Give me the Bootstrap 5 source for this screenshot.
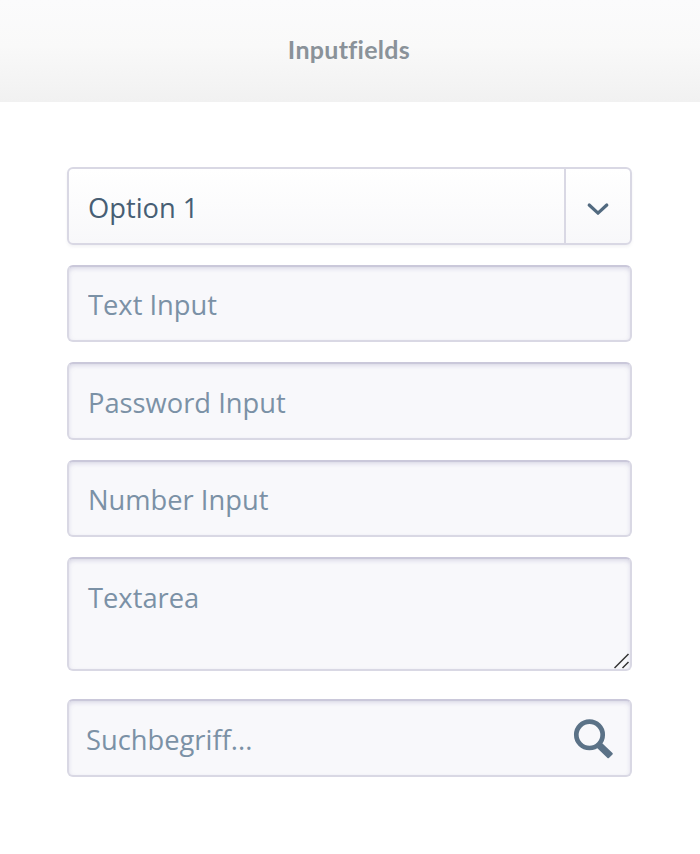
<!DOCTYPE html>
<html lang="en">
<head>
<meta charset="utf-8">
<meta name="viewport" content="width=device-width, initial-scale=1">
<title>Inputfields</title>
<link href="https://cdn.jsdelivr.net/npm/bootstrap@5.3.0/dist/css/bootstrap.min.css" rel="stylesheet">
<style>
body{font-family:"Open Sans",sans-serif;min-height:854px}
.page-head{height:101.5px;padding-bottom:3px;background:linear-gradient(#fbfbfc,#f9f9f9 45%,#f1f1f1)}
.page-title{font:700 25px/30px Lato,sans-serif;color:#8a9299;letter-spacing:.3px;padding-right:2px;font-variant-ligatures:none}
.fields{padding:65.5px 68px 0 67px;gap:20px}
.field,.field.form-control{height:77.5px;border:2px solid #d9d8e4;border-radius:6px;font-size:27.3px;line-height:38px;color:#475e74;padding:0 19px}
.sunken.form-control{background:#f8f8fb;border-top-color:#cac8da;padding-top:2.5px;box-shadow:inset 0 2px 5px -1px rgba(120,115,165,.3)}
.sunken::placeholder{color:#7b91a6;opacity:1}
.picker{background:linear-gradient(#fff,#f8f8fa);box-shadow:0 2px 3px rgba(100,100,130,.08)}
.picker-label{padding-top:4px}
.picker-arrow{width:66px;padding-top:6px;border-left:2px solid #d9d8e4}
.area.form-control{height:114px;min-height:0;padding:20px 19px 0;resize:none;display:block}
.grip{right:2px;bottom:2px}
.search-wrap{margin-top:8px}
.search.form-control{padding-top:3px;padding-left:17px;padding-right:70px}
.search-icon{right:17px;top:18px}
</style>
</head>
<body class="bg-white">
<header class="page-head d-flex justify-content-center align-items-center">
  <h1 class="page-title m-0">Inputfields</h1>
</header>
<form class="fields d-flex flex-column">
  <div class="field picker d-flex align-items-stretch justify-content-between pe-0" role="button">
    <span class="picker-label align-self-center">Option 1</span>
    <span class="picker-arrow d-flex align-items-center justify-content-center">
      <svg width="24" height="16" viewBox="0 0 24 16" fill="none" stroke="#526a80" stroke-width="3.2" stroke-linecap="round" stroke-linejoin="round"><path d="M3.2 4 12 12.2l8.800-8.200"/></svg>
    </span>
  </div>
  <input class="form-control field sunken" type="text" placeholder="Text Input">
  <input class="form-control field sunken" type="password" placeholder="Password Input">
  <input class="form-control field sunken" type="number" placeholder="Number Input">
  <div class="position-relative">
    <textarea class="form-control field sunken area" placeholder="Textarea"></textarea>
    <svg class="grip position-absolute" width="16" height="16" viewBox="0 0 16 16" stroke="#333" stroke-width="1.5"><path d="M.5 15 14.500 1M8.500 15l6-6"/></svg>
  </div>
  <div class="search-wrap position-relative">
    <input class="form-control field sunken search" type="text" placeholder="Suchbegriff...">
    <svg class="search-icon position-absolute" width="42" height="42" viewBox="0 0 42 42" fill="none" stroke="#5b7287"><circle cx="16.500" cy="17.800" r="13.200" stroke-width="4.700"/><path d="M27.500 26 38.800 36.800 35.200 40.200 24 29.500z" fill="#5b7287" stroke-width="2" stroke-linejoin="round"/></svg>
  </div>
</form>
<script src="https://cdn.jsdelivr.net/npm/bootstrap@5.3.0/dist/js/bootstrap.bundle.min.js"></script>
</body>
</html>
